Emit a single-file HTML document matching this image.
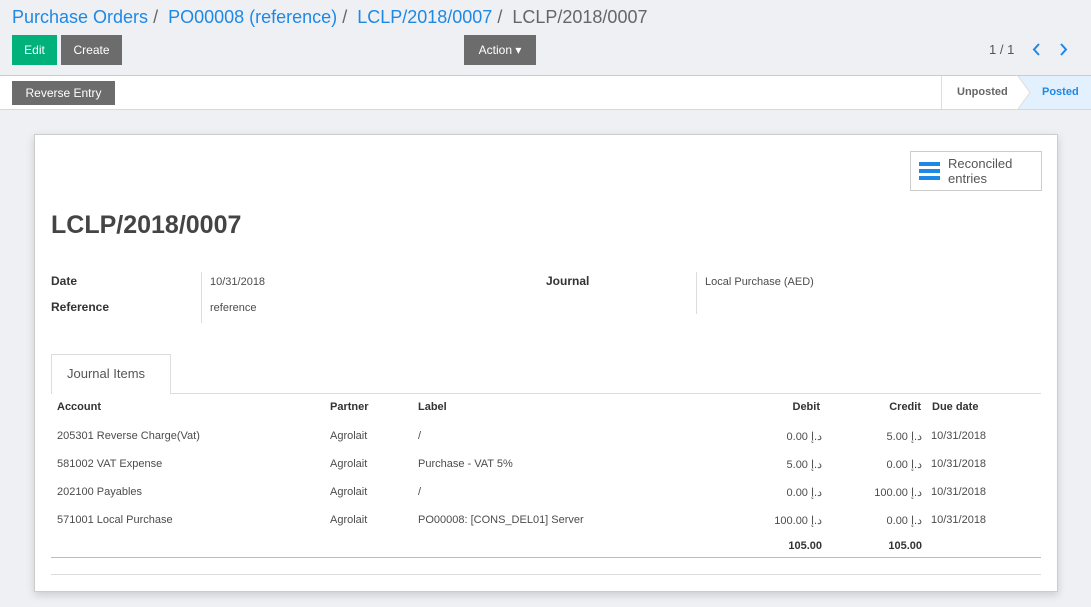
<!DOCTYPE html>
<html><head><meta charset="utf-8"><style>
*{margin:0;padding:0;box-sizing:border-box}
body{width:1091px;height:607px;background:#eff0f4;font-family:"Liberation Sans",sans-serif;color:#4c4c4c;position:relative;overflow:hidden}
.a{position:absolute;white-space:nowrap}
.btn{position:absolute;color:#fff;font-size:12px;display:flex;align-items:center;justify-content:center}
.b{font-weight:bold}
.r{text-align:right}
</style></head><body>
<div class="a" style="left:12px;top:7px;font-size:18px;color:#1e88e5">Purchase Orders <span style="color:#666">/</span>&nbsp; PO00008 (reference) <span style="color:#666">/</span>&nbsp; LCLP/2018/0007 <span style="color:#666">/</span>&nbsp; <span style="color:#666">LCLP/2018/0007</span></div>
<div class="btn" style="left:12px;top:35px;width:45px;height:30px;background:#00b27a">Edit</div>
<div class="btn" style="left:61px;top:35px;width:61px;height:30px;background:#6c6c6c">Create</div>
<div class="btn" style="left:464px;top:35px;width:72px;height:30px;background:#6c6c6c">Action ▾</div>
<div class="a" style="left:989px;top:42px;font-size:13px;color:#555">1 / 1</div>
<svg class="a" style="left:1030px;top:43px" width="40" height="13"><path d="M9 1L4 6.5L9 12" stroke="#1e88e5" stroke-width="2" fill="none"/><path d="M31 1L36 6.5L31 12" stroke="#1e88e5" stroke-width="2" fill="none"/></svg>
<div class="a" style="left:0;top:75px;width:1091px;height:35px;background:#fff;border-top:1px solid #c8ccd4;border-bottom:1px solid #d8d8d8"></div>
<div class="btn" style="left:12px;top:81px;width:103px;height:24px;background:#6c6c6c">Reverse Entry</div>
<div class="a" style="left:941px;top:76px;width:1px;height:33px;background:#ddd"></div>
<svg class="a" style="left:1018px;top:76px" width="73" height="33"><polygon points="0,0 73,0 73,33 0,33 12,16.5" fill="#e2f1fd"/><polyline points="0,0 12,16.5 0,33" stroke="#ddd" fill="none"/></svg>
<div class="a b" style="left:957px;top:86px;font-size:11px;color:#666">Unposted</div>
<div class="a b" style="left:1042px;top:86px;font-size:11px;color:#1e88e5">Posted</div>
<div class="a" style="left:34px;top:134px;width:1024px;height:458px;background:#fff;border:1px solid #ccc;box-shadow:0 3px 8px rgba(0,0,0,.15)"></div>
<div class="a" style="left:910px;top:151px;width:132px;height:40px;border:1px solid #ccc"></div>
<div class="a" style="left:919px;top:162px;width:21px;height:4px;background:#1e88e5;box-shadow:0 7px 0 #1e88e5,0 14px 0 #1e88e5"></div>
<div class="a" style="left:948px;top:156px;font-size:13px;line-height:15px;color:#555">Reconciled<br>entries</div>
<div class="a b" style="left:51px;top:211px;font-size:25px;color:#444">LCLP/2018/0007</div>
<div class="a b" style="left:51px;top:274px;font-size:12px;color:#333">Date</div>
<div class="a b" style="left:51px;top:300px;font-size:12px;color:#333">Reference</div>
<div class="a" style="left:201px;top:272px;width:1px;height:51px;background:#ddd"></div>
<div class="a" style="left:210px;top:276px;font-size:11px">10/31/2018</div>
<div class="a" style="left:210px;top:302px;font-size:11px">reference</div>
<div class="a b" style="left:546px;top:274px;font-size:12px;color:#333">Journal</div>
<div class="a" style="left:696px;top:272px;width:1px;height:42px;background:#ddd"></div>
<div class="a" style="left:705px;top:276px;font-size:11px">Local Purchase (AED)</div>
<div class="a" style="left:51px;top:393px;width:990px;height:1px;background:#ddd"></div>
<div class="a" style="left:51px;top:354px;width:120px;height:40px;background:#fff;border:1px solid #ddd;border-bottom:none"></div>
<div class="a" style="left:67px;top:366px;font-size:13px;color:#555">Journal Items</div>
<div style="font-size:11px">
<div class="a b" style="left:57px;top:401px;color:#333">Account</div>
<div class="a b" style="left:330px;top:401px;color:#333">Partner</div>
<div class="a b" style="left:418px;top:401px;color:#333">Label</div>
<div class="a b r" style="left:720px;width:100px;top:401px;color:#333">Debit</div>
<div class="a b r" style="left:821px;width:100px;top:401px;color:#333">Credit</div>
<div class="a b" style="left:932px;top:401px;color:#333">Due date</div>

<div class="a" style="left:57px;top:430px">205301 Reverse Charge(Vat)</div><div class="a" style="left:330px;top:430px">Agrolait</div><div class="a" style="left:418px;top:430px">/</div><div class="a r" style="left:700px;width:122px;top:430px">0.00 د.إ</div><div class="a r" style="left:800px;width:122px;top:430px">5.00 د.إ</div><div class="a" style="left:931px;top:430px">10/31/2018</div>
<div class="a" style="left:57px;top:458px">581002 VAT Expense</div><div class="a" style="left:330px;top:458px">Agrolait</div><div class="a" style="left:418px;top:458px">Purchase - VAT 5%</div><div class="a r" style="left:700px;width:122px;top:458px">5.00 د.إ</div><div class="a r" style="left:800px;width:122px;top:458px">0.00 د.إ</div><div class="a" style="left:931px;top:458px">10/31/2018</div>
<div class="a" style="left:57px;top:486px">202100 Payables</div><div class="a" style="left:330px;top:486px">Agrolait</div><div class="a" style="left:418px;top:486px">/</div><div class="a r" style="left:700px;width:122px;top:486px">0.00 د.إ</div><div class="a r" style="left:800px;width:122px;top:486px">100.00 د.إ</div><div class="a" style="left:931px;top:486px">10/31/2018</div>
<div class="a" style="left:57px;top:514px">571001 Local Purchase</div><div class="a" style="left:330px;top:514px">Agrolait</div><div class="a" style="left:418px;top:514px">PO00008: [CONS_DEL01] Server</div><div class="a r" style="left:700px;width:122px;top:514px">100.00 د.إ</div><div class="a r" style="left:800px;width:122px;top:514px">0.00 د.إ</div><div class="a" style="left:931px;top:514px">10/31/2018</div>
<div class="a b r" style="left:700px;width:122px;top:540px;color:#333">105.00</div>
<div class="a b r" style="left:800px;width:122px;top:540px;color:#333">105.00</div>
</div>
<div class="a" style="left:51px;top:557px;width:990px;height:1px;background:#bbb"></div>
<div class="a" style="left:51px;top:574px;width:990px;height:1px;background:#ddd"></div>
</body></html>
